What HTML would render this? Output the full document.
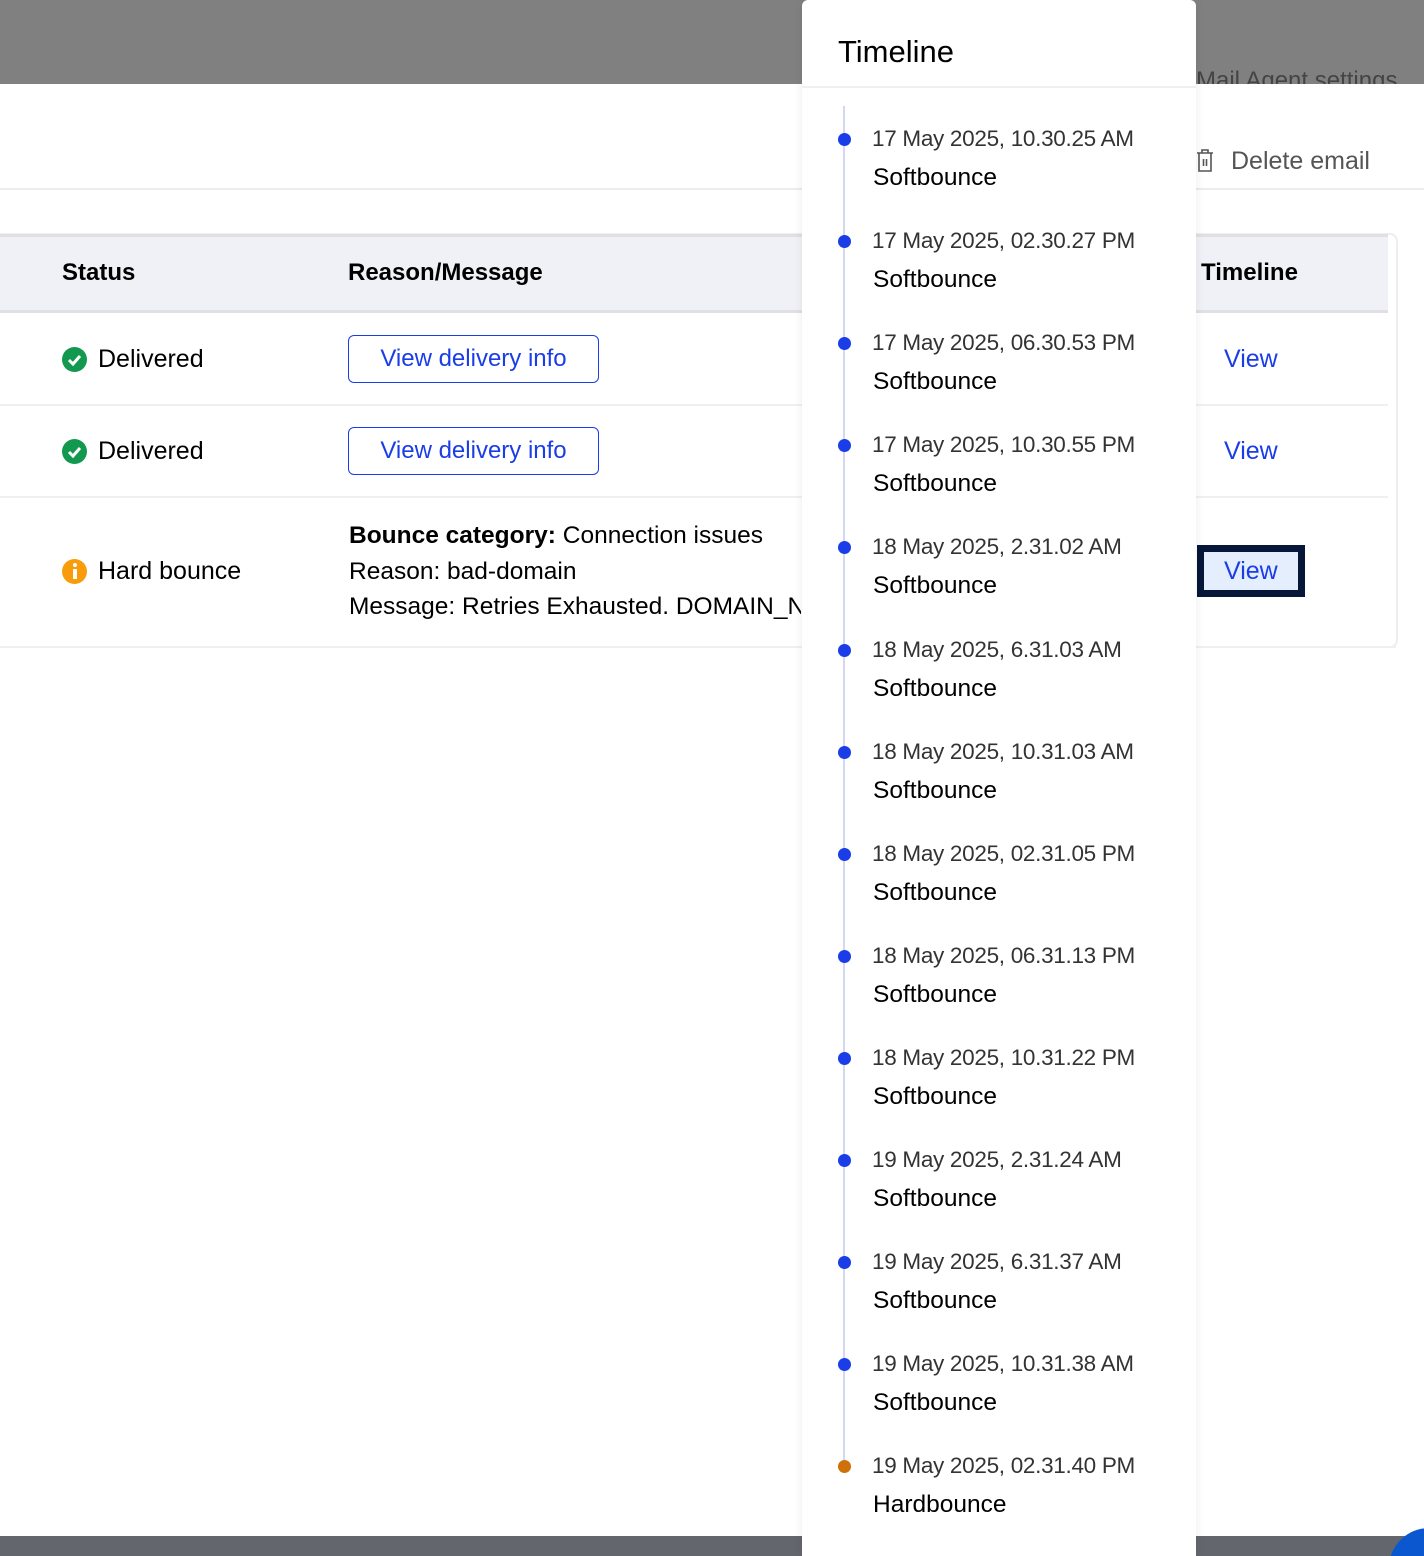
<!DOCTYPE html>
<html><head><meta charset="utf-8"><style>
*{margin:0;padding:0;box-sizing:border-box}
html,body{width:1424px;height:1556px;overflow:hidden}
body{background:#fff;font-family:"Liberation Sans",sans-serif;color:#000}
#w{position:relative;width:1424px;height:1556px;overflow:hidden}
.a{position:absolute;white-space:nowrap}
.t{font-size:23px;line-height:30px}
.btn{position:absolute;left:348px;width:251px;height:48px;border:1.5px solid #1a3de8;border-radius:6px;color:#1a3de8;font-size:24px;text-align:center;line-height:45px}
.ic{position:absolute;left:62px;width:25px;height:25px;border-radius:50%}
.d{position:absolute;left:838px;width:13px;height:13px;border-radius:50%;background:#1a3de8}
.dt{position:absolute;left:872px;font-size:22.5px;color:#333;white-space:nowrap;line-height:28px;letter-spacing:-0.3px}
.st{position:absolute;left:873px;font-size:24.5px;color:#000;white-space:nowrap;line-height:30px}
</style></head><body><div id="w">
<div class="a" style="left:0;top:0;width:1424px;height:84px;background:#808080"></div>
<div class="a t" style="left:1196px;top:66px;color:#444;font-size:24px">Mail Agent settings</div>
<div class="a" style="left:0;top:84px;width:1424px;height:1452px;background:#fff"></div>
<div class="a" style="left:0;top:188px;width:1424px;height:2px;background:#ececee"></div>
<svg class="a" style="left:1195px;top:148px" width="20" height="26" viewBox="0 0 20 26"><path d="M2 5h16M7 5V2h6v3M4 5v18h12V5M8.5 11v7M11.5 11v7" fill="none" stroke="#555" stroke-width="1.6"/></svg>
<div class="a" style="left:1231px;top:144px;font-size:25px;color:#555;line-height:34px">Delete email</div>
<div class="a" style="left:-10px;top:233px;width:1408px;height:415px;border:2px solid #eeeef0;border-radius:8px"></div>
<div class="a" style="left:0;top:234px;width:1388px;height:79px;background:#f0f1f6;border-top:3px solid #e0e0e4;border-bottom:3px solid #e0e0e4"></div>
<div class="a" style="left:62px;top:258px;font-size:24px;font-weight:bold;line-height:30px">Status</div>
<div class="a" style="left:348px;top:258px;font-size:24px;font-weight:bold;line-height:30px">Reason/Message</div>
<div class="a" style="left:1201px;top:258px;font-size:24px;font-weight:bold;line-height:30px">Timeline</div>
<div class="a" style="left:0;top:404px;width:1388px;height:2px;background:#f0f0f2"></div>
<div class="a" style="left:0;top:496px;width:1388px;height:2px;background:#f0f0f2"></div>
<div class="a" style="left:0;top:646px;width:1396px;height:2px;background:#f0f0f2"></div>
<div class="ic" style="top:347px;background:#13984f"></div><svg class="a" style="left:62px;top:347px" width="25" height="25"><path d="M7 13l4 4 7-8" fill="none" stroke="#fff" stroke-width="3"/></svg>
<div class="a t" style="left:98px;top:344px;font-size:25px">Delivered</div>
<div class="ic" style="top:439px;background:#13984f"></div><svg class="a" style="left:62px;top:439px" width="25" height="25"><path d="M7 13l4 4 7-8" fill="none" stroke="#fff" stroke-width="3"/></svg>
<div class="a t" style="left:98px;top:436px;font-size:25px">Delivered</div>
<div class="ic" style="top:559px;background:#f99c0c"></div><div class="a" style="left:73px;top:563px;width:4px;height:4px;background:#fff;border-radius:2px"></div><div class="a" style="left:73px;top:569px;width:4px;height:10px;background:#fff"></div>
<div class="a t" style="left:98px;top:556px;font-size:25px">Hard bounce</div>
<div class="btn" style="top:335px">View delivery info</div>
<div class="btn" style="top:427px">View delivery info</div>
<div class="a" style="left:349px;top:518px;font-size:24.5px;line-height:35.5px;width:452px;overflow:hidden"><b>Bounce category:</b> Connection issues<br>Reason: bad-domain<br>Message: Retries Exhausted. DOMAIN_NOT_FOUND</div>
<div class="a" style="left:1224px;top:344px;font-size:25px;color:#1a3de8;line-height:30px">View</div>
<div class="a" style="left:1224px;top:436px;font-size:25px;color:#1a3de8;line-height:30px">View</div>
<div class="a" style="left:1197px;top:545px;width:108px;height:52px;border:7px solid #07173a;background:#e5eefc"></div>
<div class="a" style="left:1224px;top:556px;font-size:25px;color:#1a3de8;line-height:30px">View</div>
<div class="a" style="left:0;top:1536px;width:1424px;height:20px;background:#63666d"></div>
<div class="a" style="left:1389px;top:1528px;width:80px;height:80px;border-radius:50%;background:#0b57d0"></div>
<div class="a" style="left:802px;top:0;width:394px;height:1556px;background:#fff;border-radius:6px 6px 0 0;box-shadow:0 0 10px rgba(0,0,0,0.08)"></div>
<div class="a" style="left:838px;top:34px;font-size:31px;line-height:36px">Timeline</div>
<div class="a" style="left:802px;top:86px;width:394px;height:2px;background:#efeff1"></div>
<div class="a" style="left:843px;top:106px;width:2px;height:1362px;background:#d4d7ef"></div>
<div id="tl"></div>
</div>
<script>
var d=["17 May 2025, 10.30.25 AM","17 May 2025, 02.30.27 PM","17 May 2025, 06.30.53 PM","17 May 2025, 10.30.55 PM","18 May 2025, 2.31.02 AM","18 May 2025, 6.31.03 AM","18 May 2025, 10.31.03 AM","18 May 2025, 02.31.05 PM","18 May 2025, 06.31.13 PM","18 May 2025, 10.31.22 PM","19 May 2025, 2.31.24 AM","19 May 2025, 6.31.37 AM","19 May 2025, 10.31.38 AM","19 May 2025, 02.31.40 PM"];
var h="";for(var i=0;i<d.length;i++){var y=139+102.1*i;var last=i==d.length-1;
h+='<div class="d" style="top:'+(y-6)+'px;'+(last?'background:#d0700a':'')+'"></div>';
h+='<div class="dt" style="top:'+(y-14)+'px">'+d[i]+'</div>';
h+='<div class="st" style="top:'+(y+24)+'px">'+(last?'Hardbounce':'Softbounce')+'</div>';}
document.getElementById('tl').innerHTML=h;
</script>
</body></html>
